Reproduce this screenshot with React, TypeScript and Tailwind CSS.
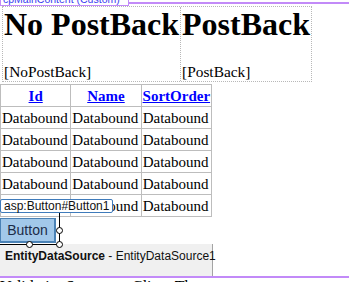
import React from 'react'

const serif = "font-['Liberation_Serif','Times_New_Roman',serif]"
const sans = "font-['Liberation_Sans',Arial,sans-serif]"

const rows = [1, 2, 3, 4, 5]

function Handle({ className }: { className: string }) {
  return <div className={`absolute w-[7px] h-[7px] rounded-full border border-black bg-white ${className}`} />
}

export default function App() {
  return (
    <div className={`relative w-[349px] h-[282px] overflow-hidden bg-white text-black ${serif}`}>
      {/* content placeholder label + purple frame top */}
      <div className="flex h-[6px]">
        <div className="w-[129px] h-[6px] overflow-hidden border-x border-b border-[#c28af8]">
          <div className={`-mt-[7px] pl-[2px] text-[10.5px] leading-[13px] text-[#3a3cf0] whitespace-nowrap ${sans}`}>
            cpMainContent (Custom)
          </div>
        </div>
        <div className="flex-1 mt-[2px] h-[2px] bg-[#c28af8]" />
      </div>

      {/* layout table */}
      <div className="ml-[2px] flex w-[310px] h-[76px] border border-dotted border-[#b8b8b8]">
        <div className="w-[178px] flex flex-col justify-between border-r border-dotted border-[#b8b8b8] pl-[1px] pt-[1px]">
          <h1 className="text-[32px] leading-[32px] font-bold whitespace-nowrap">No PostBack</h1>
          <span className="text-[15.4px] leading-[18px]">[NoPostBack]</span>
        </div>
        <div className="flex-1 flex flex-col justify-between pl-[1px] pt-[1px]">
          <h1 className="text-[32px] leading-[32px] font-bold whitespace-nowrap">PostBack</h1>
          <span className="text-[15.4px] leading-[18px]">[PostBack]</span>
        </div>
      </div>

      {/* grid view */}
      <table className="mt-[2px] table-fixed border-collapse w-[212px] text-[15px]">
        <thead>
          <tr>
            {['Id', 'Name', 'SortOrder'].map(h => (
              <th key={h} className="h-[22px] p-0 leading-[18px] border border-[#bdbdbd] text-center font-bold">
                <span className="text-[#0000ff] underline">{h}</span>
              </th>
            ))}
          </tr>
        </thead>
        <tbody>
          {rows.map(r => (
            <tr key={r}>
              {[0, 1, 2].map(c => (
                <td key={c} className="h-[22px] p-0 pl-[1px] leading-[18px] border border-[#bdbdbd] whitespace-nowrap">Databound</td>
              ))}
            </tr>
          ))}
        </tbody>
      </table>

      {/* button */}
      <div className={`mt-[1px] w-[56px] h-[25px] flex items-center justify-center bg-[#a2c8ea] border border-[#4a82b6] border-b-2 border-r-2 text-[14px] text-[#1c2c48] ${sans}`}>
        Button
      </div>

      {/* data source control */}
      <div className={`mt-[1px] w-[213px] h-[32px] bg-[#f0f0f0] border-r border-[#a4a4a4] pl-[5px] pt-[4px] text-[12px] leading-[16px] text-[#111] whitespace-nowrap ${sans}`}>
        <span className="font-bold">EntityDataSource</span> - EntityDataSource1
      </div>

      {/* purple frame bottom */}
      <div className="h-[2px] bg-[#c28af8]" />
      <div className="mt-[1px] text-[16px] leading-[16px] whitespace-nowrap">ValidationSummary Client The</div>

      {/* designer overlays */}
      <div className={`absolute left-0 top-[199px] h-[14px] px-[3px] bg-white border border-[#3f7bbb] rounded-[2px] text-[12px] leading-[12px] text-[#111] whitespace-nowrap ${sans}`}>
        asp:Button#Button1
      </div>
      <div className="absolute left-[59px] top-[213px] w-px h-[32px] bg-black" />
      <div className="absolute left-0 top-[244px] w-[60px] h-px bg-black" />
      <Handle className="left-[56px] top-[227px]" />
      <Handle className="left-[26px] top-[241px]" />
      <Handle className="left-[56px] top-[241px]" />
    </div>
  )
}
